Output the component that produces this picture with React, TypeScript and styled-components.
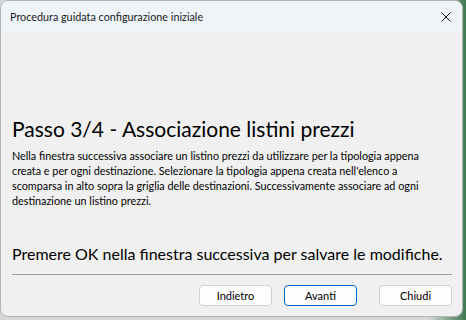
import React from 'react';
import styled, { createGlobalStyle } from 'styled-components';

const GlobalStyle = createGlobalStyle`
  html, body {
    margin: 0;
    padding: 0;
    width: 466px;
    height: 320px;
    overflow: hidden;
    background: #dcdcdc;
  }
  body {
    font-family: Lato, "Noto Sans", "Liberation Sans", sans-serif;
    color: #000;
  }
`;

const Desktop = styled.div`
  width: 466px;
  height: 320px;
  background: linear-gradient(90deg, #d6d6d6 0%, #d6d6d6 92%, #3f7a52 100%);
`;

const Window = styled.div`
  width: 461px;
  height: 315px;
  border: 1px solid #b4b4b4;
  border-radius: 8px;
  overflow: hidden;
  background: #f0f0f0;
  display: flex;
  flex-direction: column;
`;

const TitleBar = styled.div`
  height: 31px;
  flex: none;
  background: #eff4f9;
  display: flex;
  align-items: center;
  justify-content: space-between;
  padding: 0 0 0 9px;
`;

const Title = styled.span`
  font-size: 10.8px;
  line-height: 16px;
  color: #1a1a1a;
`;

const CloseButton = styled.div`
  width: 46px;
  height: 31px;
  display: flex;
  align-items: center;
  justify-content: center;
  margin-right: -7px;
`;

const Body = styled.div`
  flex: 1;
  display: flex;
  flex-direction: column;
  padding: 84px 10px 0 11px;
`;

const Heading = styled.h1`
  margin: 0;
  font-weight: 400;
  font-size: 21px;
  line-height: 26px;
  white-space: nowrap;
`;

const Description = styled.p`
  margin: 6px 0 0;
  font-size: 10.8px;
  line-height: 15px;
  white-space: nowrap;
`;

const Notice = styled.p`
  margin: 36px 0 0;
  font-size: 16px;
  line-height: 20px;
  white-space: nowrap;
`;

const Separator = styled.div`
  margin-top: 10px;
  height: 1px;
  background: #a0a0a0;
`;

const ButtonRow = styled.div`
  margin-top: 10px;
  display: flex;
  justify-content: flex-end;
`;

const Button = styled.button<{ $primary?: boolean; $gap?: number }>`
  width: 73px;
  height: 21px;
  margin-left: ${(p) => p.$gap ?? 0}px;
  padding: 0;
  font-family: inherit;
  font-size: 11px;
  color: #000;
  background: #fdfdfd;
  border: 1px solid ${(p) => (p.$primary ? '#0067c0' : '#d0d0d0')};
  border-radius: 4px;
`;

export default function App() {
  return (
    <Desktop>
      <GlobalStyle />
      <Window>
        <TitleBar>
          <Title>Procedura guidata configurazione iniziale</Title>
          <CloseButton>
            <svg width="10" height="10" viewBox="0 0 10 10">
              <path d="M0.5 0.5 L9.5 9.5 M9.5 0.5 L0.5 9.5" stroke="#1a1a1a" strokeWidth="1" />
            </svg>
          </CloseButton>
        </TitleBar>
        <Body>
          <Heading>Passo 3/4 - Associazione listini prezzi</Heading>
          <Description>
            Nella finestra successiva associare un listino prezzi da utilizzare per la tipologia appena
            <br />
            creata e per ogni destinazione. Selezionare la tipologia appena creata nell'elenco a
            <br />
            scomparsa in alto sopra la griglia delle destinazioni. Successivamente associare ad ogni
            <br />
            destinazione un listino prezzi.
          </Description>
          <Notice>Premere OK nella finestra successiva per salvare le modifiche.</Notice>
          <Separator />
          <ButtonRow>
            <Button>Indietro</Button>
            <Button $primary $gap={12}>Avanti</Button>
            <Button $gap={22}>Chiudi</Button>
          </ButtonRow>
        </Body>
      </Window>
    </Desktop>
  );
}
